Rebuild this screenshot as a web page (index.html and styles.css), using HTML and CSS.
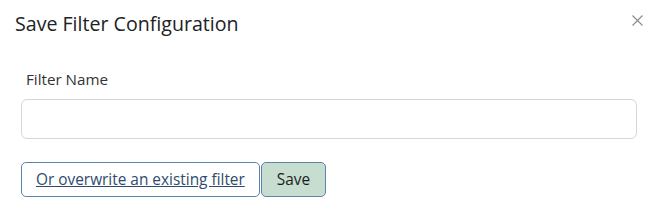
FILE: index.html
```html
<!DOCTYPE html>
<html lang="en">
<head>
  <meta charset="UTF-8" />
  <title>Save Filter Configuration</title>
  <link rel="stylesheet" href="styles.css">
</head>
<body>
  <div class="modal">
    <div class="modal-header">
      <h2>Save Filter Configuration</h2>
      <button type="button" class="close-button" aria-label="Close">
        <svg width="11" height="11" viewBox="0 0 11 11">
          <path d="M0.5 0.5L10.5 10.5M10.5 0.5L0.5 10.5" stroke="#8a8a8a" stroke-width="1.1" fill="none"/>
        </svg>
      </button>
    </div>
    <div class="modal-body">
      <label for="filterName">Filter Name</label>
      <input type="text" id="filterName" name="filterName" />
    </div>
    <div class="modal-footer">
      <button type="button" class="link-button">Or overwrite an existing filter</button>
      <button type="button" class="save-button">Save</button>
    </div>
  </div>
</body>
</html>
```

FILE: styles.css
```css
body {
  margin: 0;
  background: #fff;
  font-family: "Open Sans", Lato, sans-serif;
  color: #212529;
}

.modal {
  width: 655px;
  height: 222px;
  box-sizing: border-box;
}

.modal-header {
  display: flex;
  align-items: flex-start;
  justify-content: space-between;
  padding: 10px 12px 0 15px;
}

.modal-header h2 {
  margin: 0;
  font-size: 19.6px;
  font-weight: 400;
  line-height: 27px;
  color: #222;
}

.close-button {
  background: none;
  border: none;
  padding: 5px 0 0 0;
  cursor: pointer;
  line-height: 0;
}

.modal-body {
  padding: 32px 18px 0 21px;
}

.modal-body label {
  display: block;
  margin-left: 5px;
  font-size: 15.2px;
  line-height: 21px;
  color: #333;
}

.modal-body input {
  display: block;
  width: 100%;
  height: 40px;
  box-sizing: border-box;
  margin-top: 9px;
  border: 1px solid #d6d6d6;
  border-radius: 6px;
  padding: 6px 12px;
  font-size: 14px;
}

.modal-footer {
  display: flex;
  padding: 23px 0 0 21px;
}

.link-button {
  height: 35px;
  padding: 0 14px;
  font-family: inherit;
  font-size: 15.4px;
  color: #2f4b6e;
  text-decoration: underline;
  background: #fff;
  border: 1px solid #5b84ad;
  border-radius: 5px;
  cursor: pointer;
}

.save-button {
  height: 35px;
  padding: 0 15px;
  margin-left: 1px;
  font-family: inherit;
  font-size: 15.4px;
  color: #1e1e1e;
  background: #c6ddcf;
  border: 1px solid #5b84ad;
  border-radius: 5px;
  cursor: pointer;
}
```
